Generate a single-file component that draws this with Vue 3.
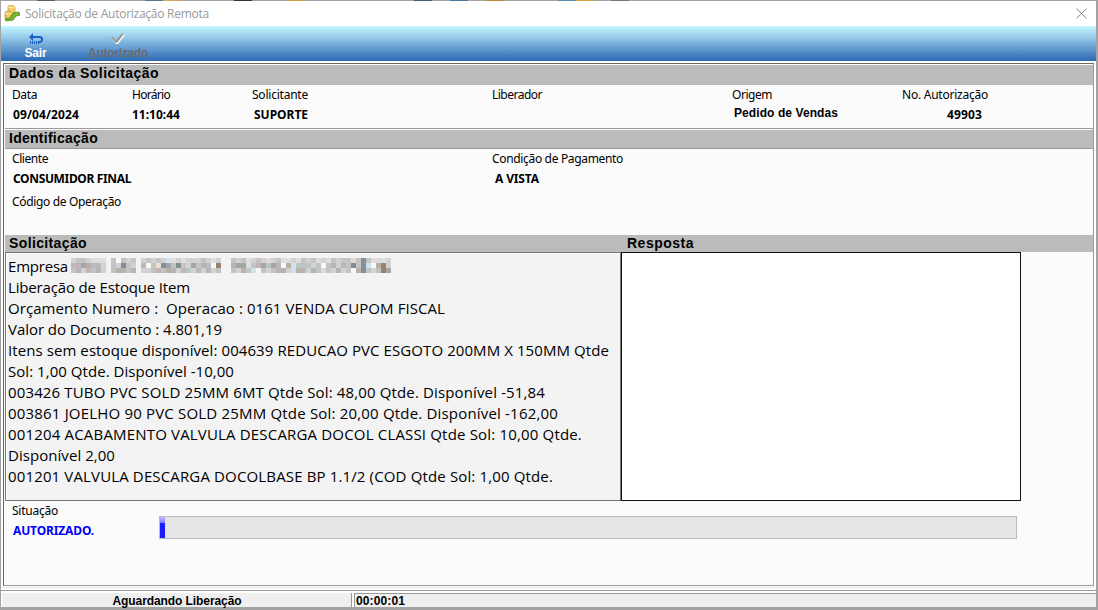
<template>
  <div class="window">
    <div class="backdrop-strip">
      <i v-for="(color, idx) in stripColors" :key="idx" :style="{ background: color }"></i>
    </div>

    <header class="titlebar">
      <svg class="app-icon" width="16" height="17" viewBox="0 0 16 17">
        <path d="M4 1l4-1 3 2v6H4z" fill="#f3cf6b" stroke="#c99a35" stroke-width=".7" />
        <path d="M1 7l4-1 4 2v5l-4 2-4-2z" fill="#f0c65c" stroke="#b88d33" stroke-width=".7" />
        <path d="M4 2l4 1 3-1M1 8l4 1 4-1" fill="none" stroke="#fff0ae" />
        <path d="M1 14l5-1 3-5 6-1 1 3-4 1-3 4-7 1z" fill="#78b82b" stroke="#4b8720" stroke-width=".8" />
      </svg>
      <span v-fit="184" class="title">Solicitação de Autorização Remota</span>
      <svg class="close" width="11" height="11" viewBox="0 0 11 11">
        <path d="M.5 .5l10 10M10.5 .5l-10 10" fill="none" stroke="#868686" />
      </svg>
    </header>

    <nav class="toolbar">
      <button class="tool exit">
        <svg width="15" height="13" viewBox="0 0 15 13">
          <path d="M0 4l4-4v3h6c3 0 4 1 4 3.500S12 10 10 10H9V8h1c1.500 0 2-.5 2-1.500S11 5 10 5H4v3z" fill="#1762c4" />
          <path d="M1.500 8v3M3.500 8v3M5.500 8v3M7.500 8v3M9.500 8v3" stroke="#1762c4" />
        </svg>
        <span v-fit="22">Sair</span>
      </button>
      <button class="tool disabled">
        <svg width="14" height="12" viewBox="0 0 14 12">
          <path d="M1 6l2-1 3 3 6-7 2 1-7 9H5z" fill="#fff" />
          <path d="M0 5l2-1 3 3 6-6.500 2 .5-7 9H5z" fill="#999" />
        </svg>
        <span v-fit="60"><u>A</u>utorizado</span>
      </button>
    </nav>

    <main class="frame">
      <h2 class="section"><span v-fit="150">Dados da Solicitação</span></h2>
      <div class="request">
        <div v-for="field in requestFields" :key="field.label" class="field" :class="field.kind">
          <label><span v-fit="field.labelWidth">{{ field.label }}</span></label>
          <strong v-if="field.value"><span v-fit="field.valueWidth">{{ field.value }}</span></strong>
        </div>
      </div>

      <h2 class="section ident"><span v-fit="89">Identificação</span></h2>
      <div class="identification">
        <div class="field">
          <label><span v-fit="36">Cliente</span></label>
          <strong><span v-fit="118">CONSUMIDOR FINAL</span></strong>
          <label class="operation"><span v-fit="109">Código de Operação</span></label>
        </div>
        <div class="field payment">
          <label><span v-fit="131">Condição de Pagamento</span></label>
          <strong><span v-fit="44">A VISTA</span></strong>
        </div>
      </div>

      <h2 class="section split">
        <span class="request-title"><span v-fit="78">Solicitação</span></span>
        <span v-fit="67">Resposta</span>
      </h2>
      <div class="messages">
        <div class="memo">
          <p>
            <span v-fit="60">Empresa</span>
            <svg class="redacted" width="320" height="15" shape-rendering="crispEdges">
              <rect
                v-for="cell in redactedCells"
                :key="cell.id"
                :x="cell.x"
                :y="cell.y"
                width="5"
                height="5"
                :fill="cell.color"
              />
            </svg>
          </p>
          <p v-for="line in memoLines" :key="line.text"><span v-fit="line.width">{{ line.text }}</span></p>
        </div>
        <div class="answer"></div>
      </div>

      <div class="status">
        <div class="field">
          <label><span v-fit="46">Situação</span></label>
          <strong class="approved"><span v-fit="81">AUTORIZADO.</span></strong>
        </div>
        <div class="progress">
          <div class="bar" :style="{ width: progress + '%' }"></div>
        </div>
      </div>
    </main>

    <footer class="statusbar">
      <div class="cell waiting"><span v-fit="129">Aguardando Liberação</span></div>
      <div class="cell elapsed"><span v-fit="49">00:00:01</span></div>
    </footer>
  </div>
</template>

<script setup>
const progress = 0.6

const requestFields = [
  { label: 'Data', labelWidth: 25, value: '09/04/2024', valueWidth: 66, kind: 'date' },
  { label: 'Horário', labelWidth: 38, value: '11:10:44', valueWidth: 48, kind: 'time' },
  { label: 'Solicitante', labelWidth: 56, value: 'SUPORTE', valueWidth: 54, kind: 'requester' },
  { label: 'Liberador', labelWidth: 50, kind: 'approver' },
  { label: 'Origem', labelWidth: 40, value: 'Pedido de Vendas', valueWidth: 104, kind: 'origin' },
  { label: 'No. Autorização', labelWidth: 86, value: '49903', valueWidth: 35, kind: 'number' },
]

const memoLines = [
  { text: 'Liberação de Estoque Item', width: 182 },
  { text: 'Orçamento Numero :  Operacao : 0161 VENDA CUPOM FISCAL', width: 437 },
  { text: 'Valor do Documento : 4.801,19', width: 214 },
  { text: 'Itens sem estoque disponível: 004639 REDUCAO PVC ESGOTO 200MM X 150MM Qtde', width: 601 },
  { text: 'Sol: 1,00 Qtde. Disponível -10,00', width: 226 },
  { text: '003426 TUBO PVC SOLD 25MM 6MT Qtde Sol: 48,00 Qtde. Disponível -51,84', width: 537 },
  { text: '003861 JOELHO 90 PVC SOLD 25MM Qtde Sol: 20,00 Qtde. Disponível -162,00', width: 550 },
  { text: '001204 ACABAMENTO VALVULA DESCARGA DOCOL CLASSI Qtde Sol: 10,00 Qtde.', width: 574 },
  { text: 'Disponível 2,00', width: 107 },
  { text: '001201 VALVULA DESCARGA DOCOLBASE BP 1.1/2 (COD Qtde Sol: 1,00 Qtde.', width: 545 },
]

const stripColors = Array.from({ length: 61 }, (_, i) =>
  ({ 2: '#655a60', 8: '#4f7890', 9: '#d3a85c', 13: '#333', 16: '#c89d45', 23: '#465d75', 25: '#47769e', 27: '#b68b3a', 31: '#5d8eaa', 32: '#d2a644', 34: '#777' })[i] || '#a3a3a3'
)

// one letter per mosaic tile, a space leaves the panel visible
const palette = {
  a: '#b5b5b5', b: '#c4c4c4', c: '#d2d2d2', d: '#dededf', g: '#a4a6a6', h: '#838c8f',
  w: '#f8f8f8', r: '#c0b6b8', v: '#bbbac7', t: '#b9b0a6', o: '#9a8271', y: '#eee1d0',
  s: '#d1e2ed', n: '#829099', m: '#bbc5c6', p: '#e3d8d6',
}
const mosaic = [
  'cbbcddd bwbcb cbcbcsdcdcccbcdcd bcbdcbcpcbddcdbcbdcdbcbbpbnbdpsc',
  'rrgtvrc bchbc rwbyngbhbcgbavwos aggdbrgmgrwtsmmmcbwbacrbhbnswtoc',
  'bacrbac mtaba ccbrmtacrmcrcacbc bcabswmcbaacstacabpbcacbwtnbcmog',
]
const redactedCells = mosaic.flatMap((row, y) =>
  [...row].flatMap((key, x) =>
    key === ' ' || x === 30 ? [] : [{ id: `${x}-${y}`, x: x * 5, y: y * 5, color: palette[key] }]
  )
)

// spreads a caption over its given width through letter spacing
const vFit = {
  mounted(el, { value }) {
    const natural = el.getBoundingClientRect().width
    el.style.letterSpacing = `${(value - natural) / el.textContent.length}px`
  },
}
</script>

<style>
body { background: #a3a3a3; overflow: hidden; }
</style>

<style scoped>
* { box-sizing: border-box; }

.window {
  width: 1098px;
  height: 610px;
  display: flex;
  flex-direction: column;
  background: #fff;
  border-left: 1px solid #a3a3a3;
  border-right: 2px solid #a3a3a3;
  border-bottom: 3px solid #a3a3a3;
  font-family: "Noto Sans", "Open Sans", sans-serif;
  font-size: 12px;
  color: #000;
}

.window span { white-space: pre; }

.backdrop-strip { display: flex; height: 1px; flex: none; }
.backdrop-strip i { flex: 1; }

.titlebar { height: 25px; flex: none; display: flex; align-items: center; padding: 0 9px 0 3px; }
.app-icon { margin-right: 5px; }
.title { font-family: "Open Sans", sans-serif; font-size: 12px; color: #999; }
.close { margin-left: auto; }

.toolbar {
  height: 35px;
  flex: none;
  display: flex;
  background: linear-gradient(#c5f5ff, #a9dcf1 20%, #2c68b5);
}

.tool {
  display: flex;
  flex-direction: column;
  align-items: center;
  border: 0;
  padding: 7px 0 0;
  background: none;
  font: bold 12px/14px "Liberation Sans", sans-serif;
  color: #fff;
}
.tool.exit { width: 69px; }
.tool.exit svg { margin-left: 1px; }
.tool.disabled { width: 96px; color: #6a6b70; }
.tool.disabled svg { margin-bottom: 1px; }

.frame {
  height: 523px;
  flex: none;
  margin: 2px 2px 0;
  padding: 1px 0 0 1px;
  border-top: 1px solid #666;
  border-left: 1px solid #666;
  border-right: 1px solid #999;
  border-bottom: 1px solid #999;
  background: #fbfbfb;
  box-shadow: 0 1px #fff, 0 2px #e3e3e3;
}

.section {
  height: 20px;
  margin: 0;
  padding-left: 4px;
  background: #bbb;
  font: bold 14px/16px "Liberation Sans", sans-serif;
}

.request {
  height: 44px;
  display: flex;
  padding-left: 7px;
  border-bottom: 1px solid #999;
}

.field { display: flex; flex-direction: column; }
.field label { height: 20px; line-height: 20px; }
.field strong { height: 20px; line-height: 20px; padding-left: 1px; }
.date, .time { width: 120px; }
.time strong { padding-left: 0; }
.requester { width: 240px; }
.requester strong { padding-left: 2px; }
.approver { width: 240px; }
.origin { width: 170px; }
.origin strong { padding-left: 2px; font-family: "Liberation Sans", sans-serif; line-height: 17px; }
.number strong { padding-left: 45px; }

.section.ident { height: 19px; margin-top: 1px; border-bottom: 1px solid #999; }

.identification { height: 86px; display: flex; padding-left: 7px; }
.identification .field { width: 480px; }
.identification .field.payment { width: 300px; }
.payment strong { padding-left: 3px; }
.operation { margin-top: 3px; }

.section.split { height: 17px; display: flex; }
.request-title { width: 618px; }

.messages { height: 249px; display: flex; }

.memo {
  width: 616px;
  padding: 3px 0 0 2px;
  background: #f3f3f3;
  border: 1px solid #777;
  box-shadow: inset 1px 1px #fff;
  font: 15px/21px "Open Sans", sans-serif;
}
.memo p { margin: 0; height: 21px; display: flex; }
.redacted { margin: 2px 0 0 3px; }

.answer { width: 400px; background: #fff; border: 1px solid #111; }

.status { display: flex; padding-left: 7px; }
.status .field { width: 147px; }
.approved { color: #00f; }

.progress {
  width: 858px;
  height: 23px;
  margin-top: 15px;
  background: #e5e5e5;
  border: 1px solid #bbb;
}
.bar { height: 100%; background: linear-gradient(#c0c0ff, #7777ff 6px, #1c1cff 6px); }

.statusbar {
  height: 17px;
  flex: none;
  display: flex;
  gap: 2px;
  margin-top: 4px;
  padding-top: 2px;
  padding-left: 1px;
  border-top: 1px solid #999;
  font: bold 12px/16px "Liberation Sans", sans-serif;
}
.cell { height: 14px; background: #efefef; }
.waiting { width: 350px; padding-left: 1px; text-align: center; border-right: 1px solid #999; }
.elapsed { flex: 1; padding-left: 1px; border-top: 1px solid #999; border-left: 1px solid #999; line-height: 14px; }
</style>
